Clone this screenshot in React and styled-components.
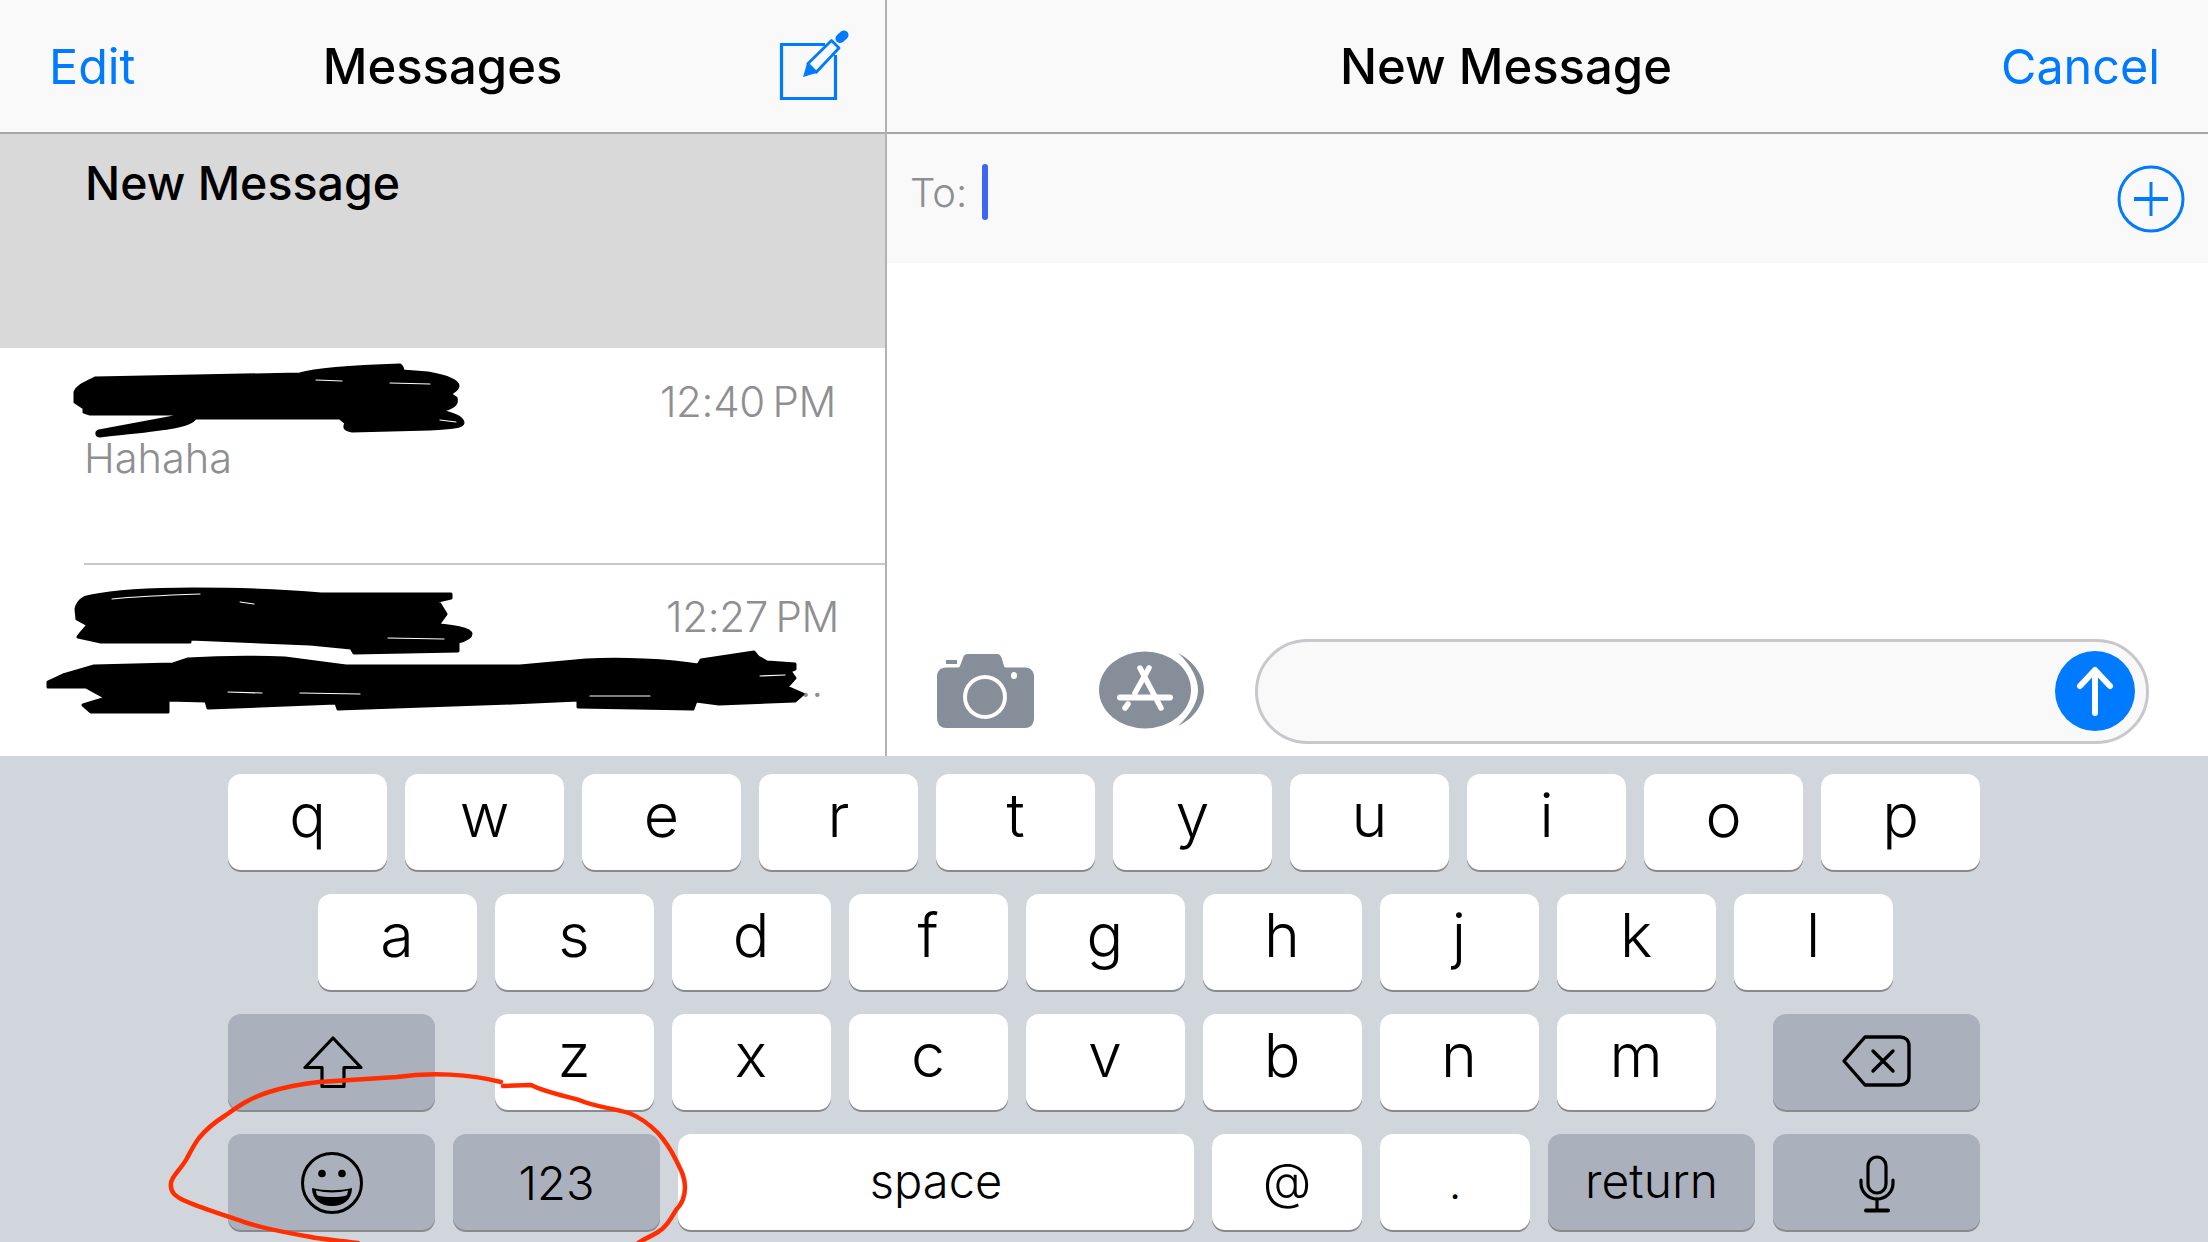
import React from 'react'
import styled, { createGlobalStyle } from 'styled-components'

const GlobalStyle = createGlobalStyle`
	html, body {
		margin: 0;
		padding: 0;
		background: #fff;
	}
	body {
		font-family: Inter, "Noto Sans", "Liberation Sans", sans-serif;
		color: #000;
		-webkit-font-smoothing: antialiased;
	}
`

const Page = styled.div`
	position: relative;
	width: 2208px;
	height: 1242px;
	overflow: hidden;
	display: flex;
	flex-direction: column;
`

const Split = styled.div`
	height: 756px;
	flex-shrink: 0;
	display: flex;
`

const ListPane = styled.div`
	width: 885px;
	border-right: 2px solid #b2b2b2;
	display: flex;
	flex-direction: column;
	flex-shrink: 0;
	overflow: hidden;
`

const DetailPane = styled.div`
	flex: 1;
	display: flex;
	flex-direction: column;
`

const NavBar = styled.div`
	height: 134px;
	flex-shrink: 0;
	box-sizing: border-box;
	border-bottom: 2px solid #a7a7aa;
	background: #f9f9f9;
	display: grid;
	grid-template-columns: ${p => p.$cols};
	align-items: center;
	padding: ${p => p.$pad};
`

const NavLink = styled.span`
	font-size: 48.5px;
	color: #007aff;
	justify-self: ${p => (p.$end ? 'end' : 'start')};
`

const NavTitle = styled.span`
	font-size: 49px;
	font-weight: 500;
	justify-self: center;
`

const SelectedRow = styled.div`
	height: 214px;
	flex-shrink: 0;
	box-sizing: border-box;
	background: #d9d9d9;
	padding: 0 0 0 85px;
	font-size: 46.5px;
	font-weight: 500;
	line-height: 98px;
`

const ConvRow = styled.div`
	height: 215px;
	flex-shrink: 0;
	box-sizing: border-box;
	margin-left: 84px;
	padding: ${p => (p.$rule ? 27 : 29)}px 50px 0 0;
	border-top: ${p => (p.$rule ? '2px solid #c8c7cc' : '0')};
	display: flex;
	flex-direction: column;
`

const ConvHead = styled.div`
	display: flex;
	justify-content: flex-end;
	height: 50px;
	margin-right: ${p => p.$pull || 0}px;
`

const Time = styled.span`
	font-size: 42px;
	font-weight: 300;
	line-height: 50px;
	letter-spacing: -0.3px;
	word-spacing: -4px;
	color: #8e8e93;
`

const Preview = styled.div`
	font-size: 41.5px;
	font-weight: 300;
	line-height: 52px;
	margin-top: ${p => p.$drop || 5}px;
	color: #8e8e93;
	padding-left: ${p => p.$indent || 0}px;
`

const ToRow = styled.div`
	height: 129px;
	flex-shrink: 0;
	background: #f9f9f9;
	display: flex;
	align-items: center;
	padding: 0 23px 0 23px;
`

const ToLabel = styled.span`
	font-size: 40px;
	font-weight: 300;
	color: #8e8e93;
	margin-top: -12px;
`

const Caret = styled.span`
	width: 6px;
	height: 56px;
	border-radius: 3px;
	background: #3d66f2;
	margin: -14px 0 0 15px;
`

const PlusWrap = styled.svg`
	margin-left: auto;
`

const MessageArea = styled.div`
	flex: 1;
`

const ComposeBar = styled.div`
	height: 117px;
	flex-shrink: 0;
	box-sizing: border-box;
	padding: 0 59px 12px 50px;
	display: flex;
	align-items: center;
`

const CameraSvg = styled.svg`
	flex-shrink: 0;
	margin-top: -2px;
`

const AppsIcon = styled.svg`
	margin: -2px 0 0 65px;
	flex-shrink: 0;
`

const InputPill = styled.div`
	flex: 1;
	height: 105px;
	margin-left: 49px;
	box-sizing: border-box;
	border: 3px solid #c7c7cc;
	border-radius: 53px;
	background: #f9f9f9;
	display: flex;
	align-items: center;
	justify-content: flex-end;
	padding: 0 11px 2px 0;
`

const Keyboard = styled.div`
	flex: 1;
	background: #d1d5dc;
	padding-top: 18px;
	display: flex;
	flex-direction: column;
	gap: 24px;
	align-items: center;
`

const KeyRow = styled.div`
	display: flex;
	width: 1752px;
	gap: 18px;
	justify-content: ${p => (p.$spread ? 'space-between' : 'center')};
	padding-left: ${p => p.$nudge || 0}px;
	box-sizing: border-box;
`

const LetterGroup = styled.div`
	display: flex;
	gap: 18px;
	margin-left: 2px;
`

const Key = styled.div`
	width: ${p => p.$w || 159}px;
	height: 96px;
	flex-shrink: 0;
	box-sizing: border-box;
	border-radius: 13px;
	background: ${p => (p.$dark ? '#abb1bc' : '#fff')};
	box-shadow: 0 2px 0 #898a8d;
	display: flex;
	align-items: center;
	justify-content: center;
	font-size: ${p => p.$size || 61}px;
	font-weight: 300;
	padding-bottom: ${p => p.$lift || 0}px;
`

const Overlay = styled.svg`
	position: absolute;
	left: 0;
	top: 0;
	pointer-events: none;
`

const ComposeSvg = styled.svg`
	justify-self: end;
	margin-right: -14px;
`

const ComposeIcon = () => (
	<ComposeSvg width="72" height="72" viewBox="0 0 72 72" fill="none">
		<path d="M47 14.500H3.500V68.500H57.500V25" stroke="#007aff" strokeWidth="3.200" />
		<path d="M29.800 33.800L53.500 10.500 61 18 38.200 42.200z" fill="#f9f9f9" stroke="#007aff" strokeWidth="2.800" strokeLinejoin="round" />
		<path d="M25 47L29 33.500 38.500 43z" fill="#007aff" />
		<path d="M62 8.500L66 5" stroke="#007aff" strokeWidth="9" strokeLinecap="round" />
	</ComposeSvg>
)

const PlusIcon = () => (
	<PlusWrap width="68" height="68" viewBox="0 0 68 68" fill="none" stroke="#007aff">
		<circle cx="34" cy="34" r="32" strokeWidth="3" />
		<path d="M17 34H51" strokeWidth="4" />
		<path d="M34 17V51" strokeWidth="3" />
	</PlusWrap>
)

const CameraIcon = () => (
	<CameraSvg width="97" height="74" viewBox="0 0 97 74">
		<path d="M31 0H60c3 0 4 2 5 5l2 7c.500 1.500 1 1.500 3 1.500H88c6 0 9 4 9 9V63c0 7-3 11-9 11H9c-6 0-9-4-9-11V22.500c0-5 3-9 9-9H20c2 0 2.500 0 3-1.500l3-8c.700-2.500 2-4 5-4z" fill="#868e99" />
		<rect x="9" y="6" width="11" height="4" fill="#868e99" />
		<circle cx="48" cy="43" r="22" fill="#fff" />
		<circle cx="48" cy="43" r="18" fill="#868e99" />
		<ellipse cx="77" cy="21.500" rx="3" ry="3.500" fill="#fff" />
	</CameraSvg>
)

const AppsGlyph = () => (
	<AppsIcon width="107" height="79" viewBox="0 0 107 79" fill="none">
		<path d="M79 2C98 12 105 28 105 39C105 50 98 66 79 75C93 62 99 50 99 39C99 28 93 15 79 2z" fill="#868e99" />
		<ellipse cx="46" cy="39" rx="46" ry="38.500" fill="#868e99" />
		<g stroke="#fff" strokeWidth="5.500" strokeLinecap="round">
			<path d="M41 17L62 57" />
			<path d="M50 17L36 42" />
			<path d="M21 46.500H71" strokeWidth="6" />
			<path d="M26 57L29 53" />
		</g>
	</AppsIcon>
)

const SendIcon = () => (
	<svg width="80" height="80" viewBox="0 0 80 80" fill="none">
		<circle cx="40" cy="40" r="40" fill="#007aff" />
		<path d="M40 62V20 M25 35L40 19 55 35" stroke="#fff" strokeWidth="6" strokeLinecap="round" strokeLinejoin="round" />
	</svg>
)

const ShiftIcon = () => (
	<svg width="60" height="54" viewBox="0 0 60 54" fill="none" style={{ margin: '2px 0 0 3px' }}>
		<path d="M30 2L2 31.500H19V50.500H41V31.500H58z" stroke="#000" strokeWidth="3.200" strokeLinejoin="round" />
	</svg>
)

const DeleteIcon = () => (
	<svg width="70" height="52" viewBox="0 0 70 52" fill="none" stroke="#000" strokeWidth="3.400" strokeLinejoin="round" strokeLinecap="round" style={{ margin: '0 2px 2px 0' }}>
		<path d="M24 2H59c5 0 9 3 9 9V41c0 6-4 9-9 9H24L3 26z" />
		<path d="M32 16L52 36 M52 16L32 36" />
	</svg>
)

const EmojiIcon = () => (
	<svg width="62" height="62" viewBox="0 0 62 62" fill="none" style={{ marginTop: 2 }}>
		<circle cx="31" cy="31" r="29.500" stroke="#000" strokeWidth="3" />
		<circle cx="21" cy="21.500" r="3.800" fill="#000" />
		<circle cx="41" cy="21.500" r="3.800" fill="#000" />
		<path d="M11 36c12 3 28 3 40 0 0 12-9 18-20 18S11 48 11 36z" fill="#000" />
		<path d="M15 38.500c10 2.500 22 2.500 32 0 -.500 3-1 4-1.500 5 -9 2-20 2-29 0-.700-1-1.200-2-1.500-5z" fill="#abb1bc" />
	</svg>
)

const MicIcon = () => (
	<svg width="36" height="58" viewBox="0 0 36 58" fill="none" stroke="#000" strokeWidth="3.200" strokeLinecap="round" style={{ marginTop: 3 }}>
		<rect x="9" y="2" width="18" height="36" rx="9" />
		<path d="M2 25V28C2 37 9 44 18 44S34 37 34 28V25" />
		<path d="M18 44V55" />
		<path d="M7 55.500H29" strokeWidth="4" />
	</svg>
)

const Scribbles = () => (
	<Overlay width="2208" height="1242" viewBox="0 0 2208 1242" fill="none" strokeLinecap="round" strokeLinejoin="round">
		<g fill="#000" stroke="#000" strokeWidth="3">
			<path d="M75 392C78 385 88 382 95 378L300 374C320 368 370 366 400 365Q404 368 402 371L428 373C445 376 458 380 458 386C458 390 452 392 450 394L456 398C458 405 452 408 440 411C455 414 463 418 463 423C463 427 450 428 430 429L352 431C344 430 344 427 346 423L340 418H195C190 428 150 430 100 436C96 436 96 432 99 431L190 414H90L84 412V408L75 402z" />
			<path d="M76 609C78 600 84 597 91 596C120 590 160 589 193 589C240 589 290 591 321 594H451V598L438 601L446 614L438 625C450 626 471 628 471 634C471 638 462 641 458 642V651L354 653L351 648L310 644L190 639V642H101L78 637L81 633L88 625L77 619z" />
			<path d="M48 682L63 675L94 666L173 664L188 659C220 657 260 657 285 658L346 666H423L520 666L586 660C620 658 670 660 698 665L701 660L754 652L758 657L767 662L795 664V669L790 671L795 678L787 687L803 694L795 701L719 704L696 701L693 709L578 707V700L512 703L338 709L336 703L208 708L206 701L168 700V712H91L83 705L106 698L86 687H48z" />
		</g>
		<g stroke="#fff" strokeWidth="1.200">
			<path d="M316 380L342 381M390 383L430 384M440 420L456 422" />
			<path d="M112 599C140 596 170 595 200 594M240 602L254 604M388 638L444 639" />
			<path d="M228 692L262 693M300 693L360 694M590 696L650 696M760 676L785 675" />
		</g>
		<path d="M501 1082C470 1074 430 1072 397 1077L319 1082C300 1084 285 1087 269 1092C250 1098 240 1105 226 1115C215 1122 207 1128 199 1138C193 1146 190 1153 186 1160C180 1170 172 1176 171 1183C170 1192 175 1196 183 1200C200 1208 222 1214 244 1222C265 1229 288 1233 311 1237C325 1240 345 1241 358 1243" stroke="#ff2d00" strokeWidth="4.500" />
		<path d="M503 1086L531 1085C545 1092 565 1096 579 1100C595 1107 612 1108 629 1113C642 1118 650 1125 658 1133C667 1143 672 1152 676 1160C682 1172 685 1178 685 1187C685 1197 682 1204 676 1210C670 1220 666 1227 658 1232C650 1237 644 1239 638 1243" stroke="#ff2d00" strokeWidth="4.500" />
	</Overlay>
)

const KEY_ROWS = ['qwertyuiop', 'asdfghjkl', 'zxcvbnm']

export default function App() {
	return (
		<Page>
			<GlobalStyle />
			<Split>
				<ListPane>
					<NavBar $cols="1fr auto 1fr" $pad="0 49px">
						<NavLink>Edit</NavLink>
						<NavTitle>Messages</NavTitle>
						<ComposeIcon />
					</NavBar>
					<SelectedRow>New Message</SelectedRow>
					<ConvRow>
						<ConvHead $pull={-1}>
							<Time>12:40 PM</Time>
						</ConvHead>
						<Preview>Hahaha</Preview>
					</ConvRow>
					<ConvRow $rule>
						<ConvHead $pull={-4}>
							<Time>12:27 PM</Time>
						</ConvHead>
						<Preview $indent={704} $drop={14}>…</Preview>
					</ConvRow>
				</ListPane>
				<DetailPane>
					<NavBar $cols="453px auto 1fr" $pad="0 48px 0 0">
						<span />
						<NavTitle>New Message</NavTitle>
						<NavLink $end>Cancel</NavLink>
					</NavBar>
					<ToRow>
						<ToLabel>To:</ToLabel>
						<Caret />
						<PlusIcon />
					</ToRow>
					<MessageArea />
					<ComposeBar>
						<CameraIcon />
						<AppsGlyph />
						<InputPill>
							<SendIcon />
						</InputPill>
					</ComposeBar>
				</DetailPane>
			</Split>
			<Keyboard>
				<KeyRow>
					{KEY_ROWS[0].split('').map(c => <Key key={c} $lift={14}>{c}</Key>)}
				</KeyRow>
				<KeyRow $nudge={2}>
					{KEY_ROWS[1].split('').map(c => <Key key={c} $lift={14}>{c}</Key>)}
				</KeyRow>
				<KeyRow $spread>
					<Key $dark $w={207}><ShiftIcon /></Key>
					<LetterGroup>
						{KEY_ROWS[2].split('').map(c => <Key key={c} $lift={14}>{c}</Key>)}
					</LetterGroup>
					<Key $dark $w={207}><DeleteIcon /></Key>
				</KeyRow>
				<KeyRow $spread>
					<Key $dark $w={207}><EmojiIcon /></Key>
					<Key $dark $w={207} $size={47}>123</Key>
					<Key $w={516} $size={47} $lift={3}>space</Key>
					<Key $w={150} $size={50} $lift={3}>@</Key>
					<Key $w={150} $size={45}>.</Key>
					<Key $dark $w={207} $size={48} $lift={3}>return</Key>
					<Key $dark $w={207}><MicIcon /></Key>
				</KeyRow>
			</Keyboard>
			<Scribbles />
		</Page>
	)
}
